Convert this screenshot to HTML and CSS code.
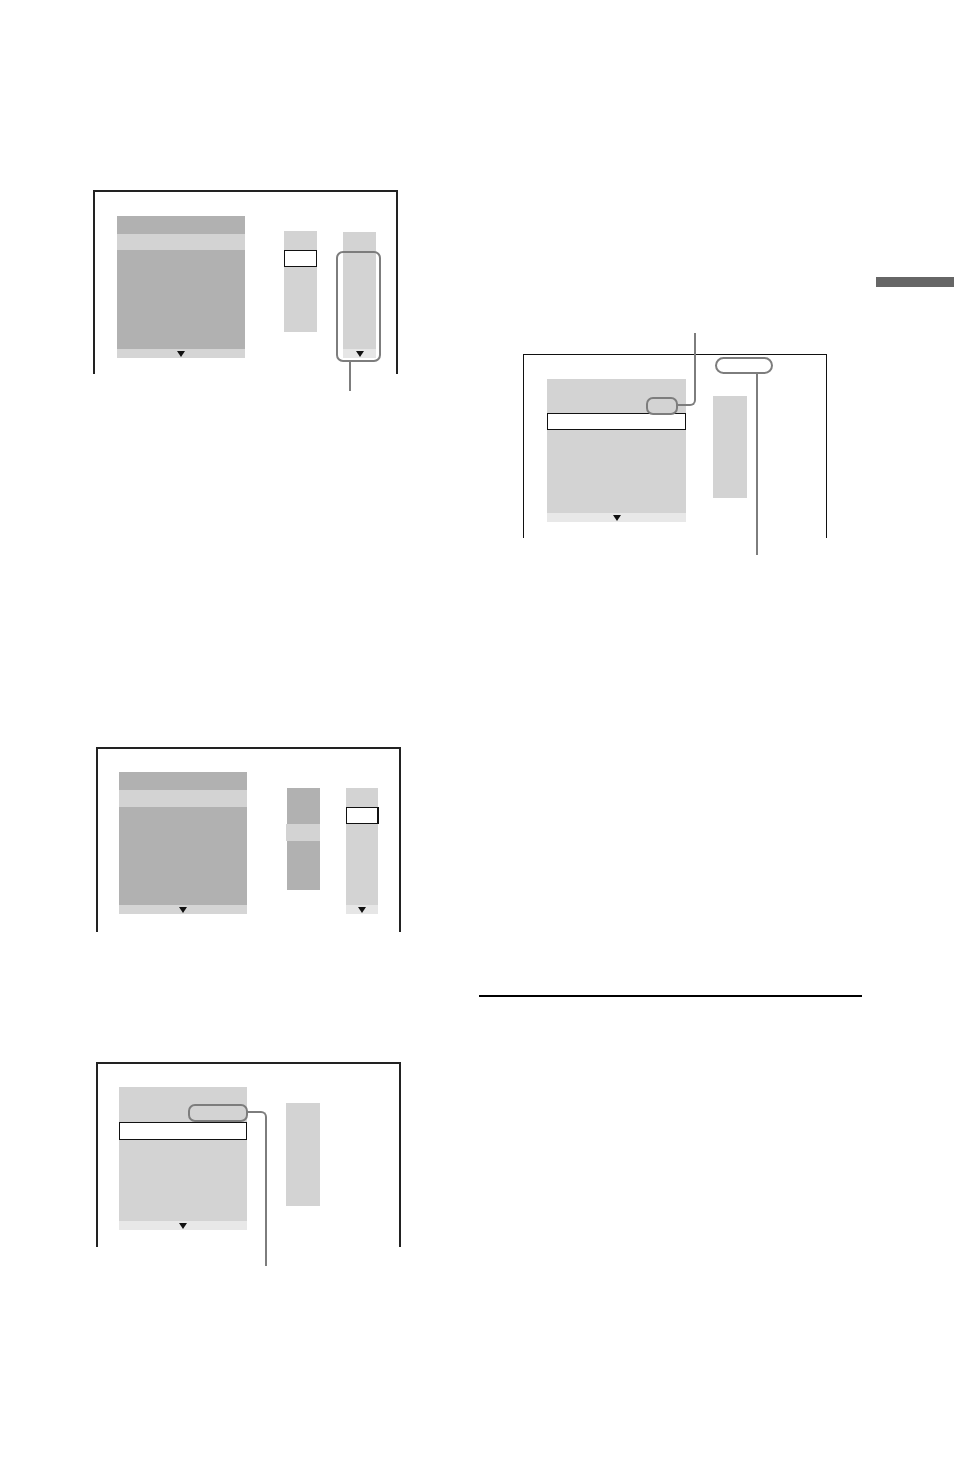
FILE: index.html
```html
<!DOCTYPE html>
<html lang="en">
<head>
    <meta charset="UTF-8">
    <meta name="viewport" content="width=device-width, initial-scale=1.0">
    <title>Setup display</title>
    <link rel="stylesheet" href="styles.css">
</head>
<body>
    <div class="page">
        <div class="col-left">
            <!-- screen 1: menu + two lists, right list circled -->
            <div class="screen screen-1">
                <div class="menu">
                    <div class="menu-head"></div>
                    <div class="menu-sel"></div>
                    <div class="menu-body"></div>
                    <div class="menu-foot"><span class="arrow"></span></div>
                </div>
                <div class="list list-1a">
                    <div class="cursor"></div>
                </div>
                <div class="list list-1b">
                    <div class="list-fill"></div>
                    <div class="list-foot"><span class="arrow"></span></div>
                </div>
                <div class="callout callout-1"></div>
                <div class="lead lead-1"></div>
            </div>

            <!-- screen 3 -->
            <div class="screen screen-3">
                <div class="menu">
                    <div class="menu-head"></div>
                    <div class="menu-sel"></div>
                    <div class="menu-body"></div>
                    <div class="menu-foot"><span class="arrow"></span></div>
                </div>
                <div class="list list-3a">
                    <div class="band"></div>
                </div>
                <div class="list list-3b">
                    <div class="cursor cursor-3"></div>
                    <div class="list-fill"></div>
                    <div class="list-foot"><span class="arrow"></span></div>
                </div>
            </div>

            <!-- screen 4 -->
            <div class="screen screen-4">
                <div class="menu menu-light menu-4">
                    <div class="row-gap"></div>
                    <div class="row-sel"></div>
                    <div class="menu-fill"></div>
                    <div class="menu-foot menu-foot-light"><span class="arrow"></span></div>
                </div>
                <div class="list list-4"></div>
                <div class="callout callout-4"></div>
                <div class="elbow elbow-4"></div>
            </div>
        </div>

        <div class="col-right">
            <!-- screen 2 -->
            <div class="screen screen-2">
                <div class="menu menu-light menu-2">
                    <div class="row-gap"></div>
                    <div class="row-sel"></div>
                    <div class="menu-fill"></div>
                    <div class="menu-foot menu-foot-light"><span class="arrow"></span></div>
                </div>
                <div class="list list-2"></div>
                <div class="callout callout-2"></div>
                <div class="elbow elbow-2"></div>
                <div class="pill"></div>
                <div class="lead lead-2"></div>
            </div>

            <div class="rule"></div>
        </div>

        <div class="side-tab"></div>
    </div>
</body>
</html>
```

FILE: styles.css
```css
body {
    margin: 0;
    background-color: #fff;
    font-family: "Liberation Sans", Arial, sans-serif;
}
.page {
    display: flex;
    align-items: flex-start;
    width: 954px;
    height: 1482px;
}
.col-left {
    margin-left: 93px;
    width: 308px;
    padding-top: 190px;
}
.col-right {
    margin-left: 78px;
    width: 383px;
}
.side-tab {
    margin-left: 14px;
    margin-top: 277px;
    width: 78px;
    height: 10px;
    background-color: #666;
}

/* screen frames */
.screen {
    position: relative;
    display: flex;
    align-items: flex-start;
    box-sizing: border-box;
    width: 305px;
    height: 184px;
    border: 2px solid #222;
    border-bottom: none;
}
.screen-1 {
    padding: 24px 0 0 22px;
}
.screen-2 {
    width: 304px;
    margin-top: 354px;
    margin-left: 44px;
    padding: 24px 0 0 23px;
    border-width: 1px;
    border-color: #111;
}
.screen-3 {
    height: 185px;
    margin-top: 373px;
    margin-left: 3px;
    padding: 23px 0 0 21px;
}
.screen-4 {
    height: 185px;
    margin-top: 130px;
    margin-left: 3px;
    padding: 23px 0 0 21px;
}

/* left menu panel */
.menu {
    width: 128px;
    display: flex;
    flex-direction: column;
    flex-shrink: 0;
}
.menu-head {
    height: 18px;
    background-color: #b1b1b1;
}
.menu-sel {
    height: 16px;
    background-color: #d3d3d3;
}
.screen-3 .menu-sel {
    height: 17px;
}
.menu-body {
    height: 99px;
    background-color: #b1b1b1;
}
.screen-3 .menu-body {
    height: 98px;
}
.menu-foot {
    height: 9px;
    background-color: #d5d5d5;
    display: flex;
    justify-content: center;
    align-items: center;
}
.menu-foot-light {
    background-color: #e8e8e8;
}
.arrow {
    width: 0;
    height: 0;
    border-left: 4px solid transparent;
    border-right: 4px solid transparent;
    border-top: 6px solid #111;
}

.menu-light {
    background-color: #d3d3d3;
}
.menu-2 {
    width: 139px;
}
.row-gap {
    height: 34px;
}
.menu-4 .row-gap {
    height: 35px;
}
.row-sel {
    box-sizing: border-box;
    height: 17px;
    background-color: #fff;
    border: 1.5px solid #111;
}
.menu-4 .row-sel {
    height: 18px;
}
.menu-fill {
    height: 83px;
}
.menu-4 .menu-fill {
    height: 81px;
}

/* narrow lists */
.list {
    flex-shrink: 0;
    display: flex;
    flex-direction: column;
    background-color: #d3d3d3;
}
.list-1a {
    width: 33px;
    height: 101px;
    margin: 15px 0 0 39px;
}
.list-1b {
    width: 33px;
    height: 126px;
    margin: 16px 0 0 26px;
}
.list-3a {
    position: relative;
    width: 33px;
    height: 102px;
    margin: 16px 0 0 40px;
    background-color: #b1b1b1;
}
.list-3b {
    width: 32px;
    height: 126px;
    margin: 16px 0 0 26px;
}
.list-2 {
    width: 34px;
    height: 102px;
    margin: 17px 0 0 27px;
}
.list-4 {
    width: 34px;
    height: 103px;
    margin: 16px 0 0 39px;
}
.cursor {
    box-sizing: border-box;
    height: 17px;
    margin-top: 19px;
    background-color: #fff;
    border: 1.5px solid #111;
}
.cursor-3 {
    border-right-width: 2px;
    margin-right: -1px;
}
.list-fill {
    flex: 1;
}
.list-foot {
    height: 9px;
    background-color: #e6e6e6;
    display: flex;
    justify-content: center;
    align-items: center;
}
.band {
    position: absolute;
    top: 36px;
    left: -1px;
    right: 0;
    height: 17px;
    background-color: #d3d3d3;
}

/* callouts and leader lines */
.callout {
    position: absolute;
    box-sizing: border-box;
    border: 2px solid #7d7d7d;
    border-radius: 7px;
}
.callout-1 {
    left: 241px;
    top: 59px;
    width: 45px;
    height: 111px;
}
.callout-2 {
    left: 122px;
    top: 42px;
    width: 32px;
    height: 18px;
}
.callout-4 {
    left: 90px;
    top: 40px;
    width: 60px;
    height: 18px;
}
.pill {
    position: absolute;
    box-sizing: border-box;
    left: 191px;
    top: 2px;
    width: 58px;
    height: 17px;
    border: 2px solid #7d7d7d;
    border-radius: 9px;
}
.lead {
    position: absolute;
    width: 2px;
    background-color: #7d7d7d;
}
.lead-1 {
    left: 254px;
    top: 170px;
    height: 29px;
}
.lead-2 {
    left: 232px;
    top: 19px;
    height: 181px;
}
.elbow {
    position: absolute;
    box-sizing: border-box;
    border: 0 solid #7d7d7d;
}
.elbow-2 {
    left: 153px;
    top: -22px;
    width: 19px;
    height: 73px;
    border-right-width: 2px;
    border-bottom-width: 2px;
    border-bottom-right-radius: 6px;
}
.elbow-4 {
    left: 149px;
    top: 47px;
    width: 20px;
    height: 155px;
    border-top-width: 2px;
    border-right-width: 2px;
    border-top-right-radius: 6px;
}

.rule {
    margin-top: 457px;
    height: 2px;
    background-color: #000;
}
```
